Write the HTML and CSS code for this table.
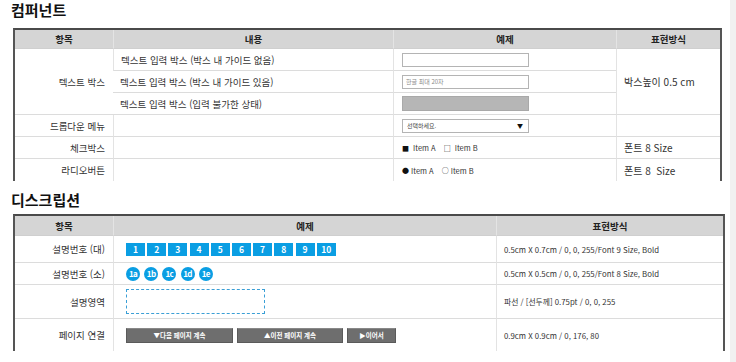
FILE: index.html
```html
<!DOCTYPE html>
<html lang="ko">
<head>
<meta charset="utf-8">
<title>컴퍼넌트 / 디스크립션</title>
<link rel="stylesheet" href="styles.css">
</head>
<body>
<div class="page">
  <main class="content">
    <h2 class="title title-first">컴퍼넌트</h2>
    <table class="grid grid-comp">
      <colgroup>
        <col class="c-item"><col class="c-desc"><col class="c-ex"><col class="c-exp">
      </colgroup>
      <thead>
        <tr class="r-head"><th>항목</th><th>내용</th><th>예제</th><th>표현방식</th></tr>
      </thead>
      <tbody>
        <tr class="r-22">
          <td class="label" rowspan="3">텍스트 박스</td>
          <td class="desc">텍스트 입력 박스 (박스 내 가이드 없음)</td>
          <td class="ex"><div class="input"></div></td>
          <td class="exp big" rowspan="3">박스높이 0.5 cm</td>
        </tr>
        <tr class="r-22">
          <td class="desc">텍스트 입력 박스 (박스 내 가이드 있음)</td>
          <td class="ex"><div class="input"><span class="ph">한글 최대 20자</span></div></td>
        </tr>
        <tr class="r-22">
          <td class="desc">텍스트 입력 박스 (입력 불가한 상태)</td>
          <td class="ex"><div class="input input-off"></div></td>
        </tr>
        <tr class="r-22">
          <td class="label">드롭다운 메뉴</td>
          <td class="desc"></td>
          <td class="ex"><div class="input select"><span class="sel-text">선택하세요.</span><span class="caret">▼</span></div></td>
          <td class="exp"></td>
        </tr>
        <tr class="r-22">
          <td class="label">체크박스</td>
          <td class="desc"></td>
          <td class="ex"><div class="opts"><span class="opt"><span class="mark">■</span>Item A</span><span class="opt"><span class="mark">□</span>Item B</span></div></td>
          <td class="exp big">폰트 8 Size</td>
        </tr>
        <tr class="r-22 last">
          <td class="label">라디오버튼</td>
          <td class="desc"></td>
          <td class="ex"><div class="opts"><span class="opt"><span class="mark dot">●</span>Item A</span><span class="opt"><span class="mark dot">○</span>Item B</span></div></td>
          <td class="exp big">폰트 8&nbsp; Size</td>
        </tr>
      </tbody>
    </table>

    <h2 class="title title-second">디스크립션</h2>
    <table class="grid grid-desc">
      <colgroup>
        <col class="c-item"><col class="c-ex2"><col class="c-exp2">
      </colgroup>
      <thead>
        <tr class="r-head2"><th>항목</th><th>예제</th><th>표현방식</th></tr>
      </thead>
      <tbody>
        <tr class="r-27">
          <td class="label">설명번호 (대)</td>
          <td class="ex2">
            <div class="nums">
              <span class="num">1</span><span class="num">2</span><span class="num">3</span><span class="num">4</span><span class="num">5</span><span class="num">6</span><span class="num">7</span><span class="num">8</span><span class="num">9</span><span class="num">10</span>
            </div>
          </td>
          <td class="exp2">0.5cm X 0.7cm / 0, 0, 255/Font 9 Size, Bold</td>
        </tr>
        <tr class="r-22">
          <td class="label">설명번호 (소)</td>
          <td class="ex2">
            <div class="circles">
              <span class="circ">1a</span><span class="circ">1b</span><span class="circ">1c</span><span class="circ">1d</span><span class="circ">1e</span>
            </div>
          </td>
          <td class="exp2">0.5cm X 0.5cm / 0, 0, 255/Font 8 Size, Bold</td>
        </tr>
        <tr class="r-34">
          <td class="label">설명영역</td>
          <td class="ex2"><div class="area"></div></td>
          <td class="exp2">파선 / [선두께] 0.75pt / 0, 0, 255</td>
        </tr>
        <tr class="r-32 last">
          <td class="label">페이지 연결</td>
          <td class="ex2">
            <div class="pbtns">
              <span class="pbtn pbtn-wide">▼다음 페이지 계속</span><span class="pbtn pbtn-wide2">▲이전 페이지 계속</span><span class="pbtn pbtn-short">▶이어서</span>
            </div>
          </td>
          <td class="exp2">0.9cm X 0.9cm / 0, 176, 80</td>
        </tr>
      </tbody>
    </table>
  </main>
  <div class="strip"></div>
</div>
</body>
</html>
```

FILE: styles.css
```css
html, body {
  margin: 0;
  padding: 0;
  background: #ffffff;
}
body {
  font-family: "Noto Sans CJK KR", "Noto Sans", sans-serif;
  color: #222;
  width: 736px;
  height: 362px;
  overflow: hidden;
}
.page {
  display: flex;
  height: 362px;
}
.content {
  flex: 1;
  padding-left: 13px;
}
.strip {
  width: 6px;
  background: #f1f1f1;
}
.title {
  margin: 0;
  font-size: 15px;
  line-height: 20px;
  font-weight: 700;
  color: #111;
  margin-left: -2px;
}
.title-first {
  margin-bottom: 8px;
}
.title-second {
  margin-top: 9px;
  margin-bottom: 4px;
}
.grid {
  border-collapse: separate;
  border-spacing: 0;
  table-layout: fixed;
  border-top: 2px solid #4a4a4a;
  border-left: 2px solid #555;
  border-right: 2px solid #555;
}
.grid-comp { width: 709px; }
.grid-desc { width: 712px; }
.grid-comp .c-item { width: 98px; }
.grid-comp .c-desc { width: 280px; }
.grid-comp .c-ex { width: 223px; }
.grid-comp .c-exp { width: 104px; }
.grid-desc .c-item { width: 98px; }
.grid-desc .c-ex2 { width: 383px; }
.grid-desc .c-exp2 { width: 227px; }

.grid th {
  background: #d5d5d5;
  font-size: 9.5px;
  font-weight: 700;
  color: #222;
  padding: 0;
  border-left: 1px solid #e4e4e4;
  border-bottom: 1px solid #cfcfcf;
}
.grid th:first-child { border-left: none; }
.r-head th { height: 18px; }
.r-head2 th { height: 19px; }

.grid td {
  padding: 0;
  vertical-align: middle;
  border-left: 1px solid #e3e3e3;
  border-bottom: 1px solid #dcdcdc;
  font-size: 9.5px;
  color: #333;
  white-space: nowrap;
}
.grid td:first-child { border-left: none; }
.grid tr.last td { border-bottom: none; }
.grid td.exp[rowspan] { border-left: 1px solid #e3e3e3; }

.r-22 td { height: 21px; }
.r-27 td { height: 26px; }
.r-34 td { height: 33px; }
.r-32 td { height: 32px; }
.grid tr.last td { height: 22px; }
.grid-desc tr.last td { height: 32px; }

.grid td.label {
  text-align: right;
  padding-right: 8px;
}
.grid td.desc {
  padding-left: 7px;
}
.grid td.ex {
  padding-left: 8px;
}
.grid td.exp {
  padding-left: 7px;
}
.grid td.exp.big {
  font-size: 10px;
  color: #333;
}
.grid td.ex2 {
  padding-left: 12px;
}
.grid td.exp2 {
  padding-left: 7px;
  font-size: 7.8px;
  color: #333;
}

.input {
  width: 125px;
  height: 12px;
  border: 1px solid #b4b4b4;
  background: #fff;
  display: flex;
  align-items: center;
  box-sizing: content-box;
}
.input-off {
  background: #b6b6b6;
  border-color: #a9a9a9;
  height: 13px;
}
.ph {
  font-size: 6px;
  color: #8a8a8a;
  padding-left: 3px;
}
.select {
  justify-content: space-between;
}
.sel-text {
  font-size: 6px;
  color: #444;
  padding-left: 4px;
}
.caret {
  font-size: 6px;
  color: #111;
  padding-right: 5px;
}
.opts {
  display: flex;
  gap: 8px;
  font-size: 7.5px;
  color: #333;
  align-items: center;
}
.opt {
  display: inline-flex;
  align-items: center;
}
.mark {
  font-size: 7px;
  color: #111;
  margin-right: 4px;
}
.mark.dot {
  margin-right: 2px;
}

.nums {
  display: flex;
  gap: 2.2px;
}
.num {
  width: 19px;
  height: 13px;
  background: #0a9ee3;
  color: #fff;
  font-size: 8.5px;
  font-weight: 700;
  display: flex;
  align-items: center;
  justify-content: center;
  line-height: 1;
}
.circles {
  display: flex;
  gap: 4.2px;
}
.circ {
  width: 14px;
  height: 14px;
  border-radius: 50%;
  background: #0a9ee3;
  color: #fff;
  font-size: 8px;
  font-weight: 700;
  letter-spacing: -0.6px;
  display: flex;
  align-items: center;
  justify-content: center;
  line-height: 1;
}
.area {
  width: 137px;
  height: 23px;
  border: 1px dashed #3a9fd6;
}
.pbtns {
  display: flex;
  gap: 4px;
}
.pbtn {
  height: 13px;
  background: #6e6e6e;
  border: 1px solid #5a5a5a;
  border-top-color: #888;
  color: #fff;
  font-size: 6.5px;
  font-weight: 700;
  display: flex;
  align-items: center;
  justify-content: center;
  line-height: 1;
}
.pbtn-wide { width: 105px; }
.pbtn-wide2 { width: 104px; }
.pbtn-short { width: 47px; }
```
